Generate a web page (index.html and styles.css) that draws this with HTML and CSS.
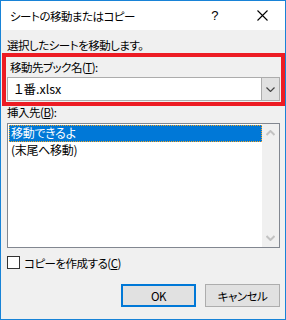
FILE: index.html
```html
<!DOCTYPE html>
<html lang="ja">
<head>
  <meta charset="UTF-8" />
  <title>シートの移動またはコピー</title>
  <link rel="stylesheet" href="styles.css">
</head>
<body>
  <div class="dialog">
    <div class="titlebar">
      <span class="title">シートの移動またはコピー</span>
      <span class="help">?</span>
      <svg class="close" width="11" height="11" viewBox="0 0 11 11"><path d="M0.5 0.5 L10.5 10.5 M10.5 0.5 L0.5 10.5" stroke="#000" stroke-width="1.1" fill="none"/></svg>
    </div>

    <div class="content">
      <div class="intro">選択したシートを移動します。</div>

      <div class="mark">
        <div class="label">移動先ブック名(<u>T</u>):</div>
        <div class="combo">
          <span class="combo-text">１番.xlsx</span>
          <span class="combo-btn">
            <svg width="9" height="5" viewBox="0 0 9 5"><path d="M0.5 0.5 L4.5 4.5 L8.5 0.5" stroke="#444" stroke-width="1.2" fill="none"/></svg>
          </span>
        </div>
      </div>

      <div class="label label-list">挿入先(<u>B</u>):</div>
      <div class="listbox">
        <div class="items">
          <div class="item selected">移動できるよ</div>
          <div class="item">(末尾へ移動)</div>
        </div>
        <div class="scrollbar">
          <svg width="9" height="6" viewBox="0 0 9 6"><path d="M0.5 5 L4.5 1 L8.5 5" stroke="#c2c2c2" stroke-width="2" fill="none"/></svg>
          <svg width="9" height="6" viewBox="0 0 9 6"><path d="M0.5 1 L4.5 5 L8.5 1" stroke="#c2c2c2" stroke-width="2" fill="none"/></svg>
        </div>
      </div>

      <div class="check-row">
        <span class="checkbox"></span>
        <span>コピーを作成する(<u>C</u>)</span>
      </div>

      <div class="buttons">
        <div class="btn btn-default">OK</div>
        <div class="btn">キャンセル</div>
      </div>
    </div>
  </div>
</body>
</html>
```

FILE: styles.css
```css
* { box-sizing: border-box; }
body { margin: 0; font-family: "Noto Sans CJK JP", "Noto Sans", sans-serif; font-size: 11.5px; letter-spacing: -0.5px; color: #000; font-feature-settings: "palt"; background: #f0f0f0; }
u { text-decoration: underline; text-underline-offset: 1px; }

.dialog { width: 286px; height: 320px; border: 1px solid #1883d7; background: #f0f0f0; display: flex; flex-direction: column; }
.titlebar { height: 29px; background: #fff; display: flex; align-items: center; padding-left: 9px; }
.title { flex: 1; }
.help { font-size: 13px; margin-right: 39px; font-family: "Liberation Sans", sans-serif; }
.close { margin-right: 17px; }

.content { padding: 0 5px 0 6px; display: flex; flex-direction: column; }
.intro { line-height: 16px; margin-top: 7px; }

.mark { border: 4px solid #ed1c24; margin: 0 -5px; padding: 0 1px 1px 1px; }
.label { line-height: 20px; padding-left: 3px; }
.combo { height: 24px; background: #fff; border: 1px solid #acacac; display: flex; align-items: stretch; }
.combo-text { flex: 1; font-size: 12.5px; letter-spacing: 0; line-height: 22px; padding-left: 6px; }
.combo-btn { width: 18px; background: #e1e1e1; border-left: 1px solid #acacac; display: flex; align-items: center; justify-content: center; }

.label-list { line-height: 14px; margin-top: -1px; padding-left: 0; }
.listbox { height: 125px; margin-top: 4px; border: 1px solid #828790; background: #fff; display: flex; }
.items { flex: 1; padding: 1px 0 0 1px; }
.item { height: 17px; line-height: 16px; padding-left: 2px; font-size: 12px; letter-spacing: -0.3px; }
.item.selected { background: #0078d7; color: #fff; outline: 1px dotted #f5a623; outline-offset: -1px; }
.scrollbar { width: 17px; background: #f0f0f0; display: flex; flex-direction: column; justify-content: space-between; align-items: center; padding: 6px 0 6px; }

.check-row { display: flex; align-items: center; gap: 4px; height: 13px; margin-top: 8px; }
.checkbox { width: 13px; height: 13px; border: 1px solid #333; background: #fff; }

.buttons { display: flex; justify-content: flex-end; gap: 9px; margin-top: 15px; }
.btn { width: 75px; height: 23px; background: #e1e1e1; border: 1px solid #adadad; display: flex; align-items: center; justify-content: center; }
.btn-default { border: 2px solid #0078d7; }
```
